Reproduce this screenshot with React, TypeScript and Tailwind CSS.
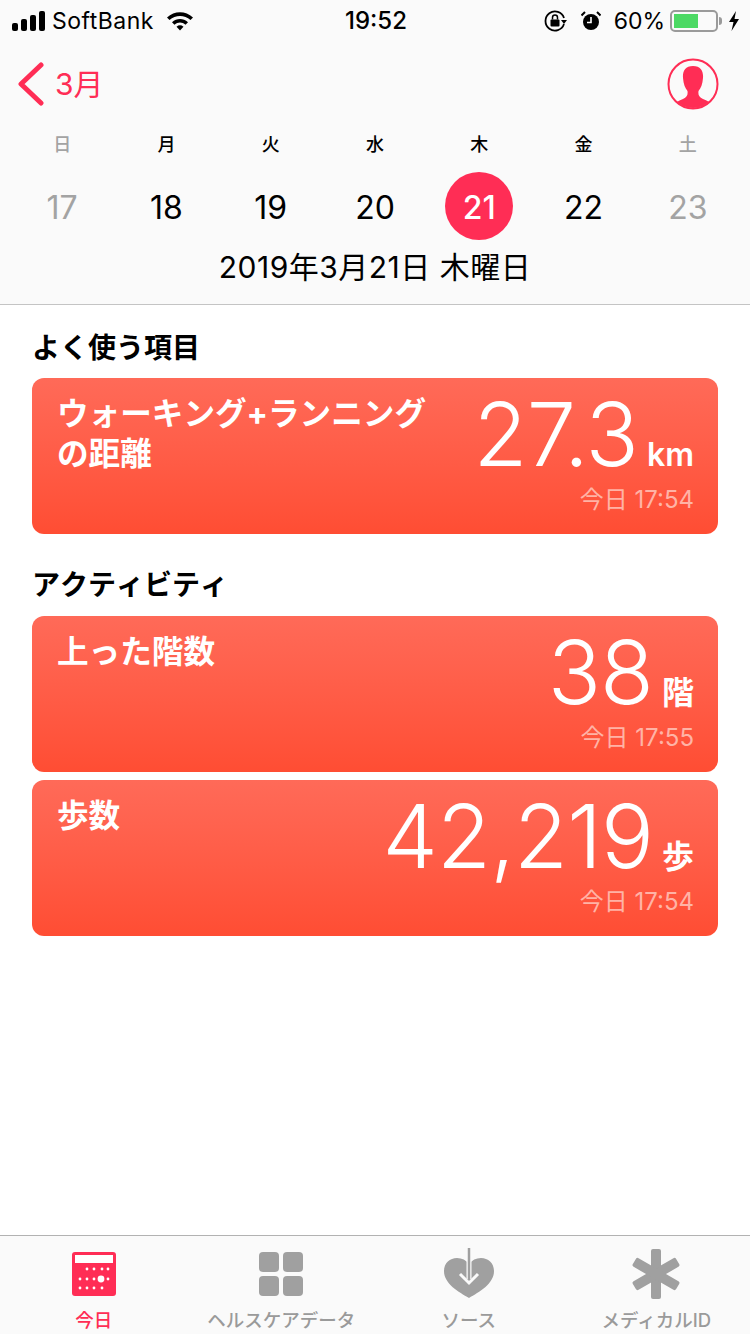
const week = [
  { label: '日', day: '17', muted: true },
  { label: '月', day: '18' },
  { label: '火', day: '19' },
  { label: '水', day: '20' },
  { label: '木', day: '21', today: true },
  { label: '金', day: '22' },
  { label: '土', day: '23', muted: true },
]

function StatusBar() {
  return (
    <div className="h-[42px] flex items-center justify-between pl-3 pr-[10px] text-[23px] text-black">
      <div className="flex items-center w-[280px]">
        <svg width="34" height="20" viewBox="0 0 34 20" className="mr-[6px]">
          <rect x="0" y="12" width="6" height="8" rx="2" fill="#000" />
          <rect x="9" y="8" width="6" height="12" rx="2" fill="#000" />
          <rect x="18" y="4" width="6" height="16" rx="2" fill="#000" />
          <rect x="27" y="0" width="6" height="20" rx="2" fill="#000" />
        </svg>
        <span className="leading-none tracking-[0.5px]">SoftBank</span>
        <svg width="28" height="20" viewBox="0 0 28 20" className="ml-[12px]">
          <path d="M1 6.5 C8.5 -0.5 19.5 -0.5 27 6.5 L24.5 9 C18.5 3.6 9.5 3.6 3.5 9 Z" fill="#000" />
          <path d="M6 11.2 C10.8 7 17.2 7 22 11.2 L19.5 13.7 C16 10.8 12 10.8 8.5 13.7 Z" fill="#000" />
          <path d="M10.5 15.7 C12.8 13.9 15.2 13.9 17.5 15.7 L14 19.5 Z" fill="#000" />
        </svg>
      </div>
      <span className="font-medium leading-none text-[24px]">19:52</span>
      <div className="flex items-center justify-end w-[280px]">
        <svg width="24" height="22" viewBox="0 0 24 22">
          <path d="M20 14 A9.5 9.5 0 1 1 20 8" fill="none" stroke="#000" strokeWidth="1.8" />
          <path d="M17 10 L23 10 L20 14 Z" fill="#000" />
          <rect x="6.5" y="9.5" width="9" height="7" rx="1" fill="#000" />
          <path d="M8.5 9.5 V7.5 A2.5 2.5 0 0 1 13.5 7.5 V9.5" fill="none" stroke="#000" strokeWidth="1.5" />
        </svg>
        <svg width="20" height="20" viewBox="0 0 20 20" className="ml-[13px]">
          <circle cx="10" cy="11" r="8" fill="#000" />
          <path d="M10 6 V11.5 H6" fill="none" stroke="#fff" strokeWidth="1.6" />
          <path d="M0.5 4.5 L4 1 M19.5 4.5 L16 1" stroke="#000" strokeWidth="2" />
        </svg>
        <span className="ml-[13px] leading-none">60%</span>
        <div className="ml-[5px] w-12 h-[22px] rounded-[5px] border-2 border-[#9a9a9a] p-[2px] flex">
          <div className="w-[60%] bg-[#4cd964]" />
        </div>
        <div className="w-[3px] h-2 bg-[#9a9a9a] rounded-r-sm ml-[1px]" />
        <svg width="12" height="20" viewBox="0 0 12 20" className="ml-[6px]">
          <path d="M8 0 L1 11 H5.5 L3.5 20 L11 8 H6.5 Z" fill="#000" />
        </svg>
      </div>
    </div>
  )
}

function Header() {
  return (
    <div className="bg-[#fafafa] border-b border-[#c4c4c4] h-[305px]">
      <StatusBar />
      <div className="flex items-center justify-between h-[84px] pl-[18px] pr-[31px]">
        <div className="flex items-center text-[#ff2d55]">
          <svg width="26" height="44" viewBox="0 0 26 44">
            <path d="M23 3 L3 22 L23 41" fill="none" stroke="#ff2d55" strokeWidth="5" strokeLinecap="round" strokeLinejoin="round" />
          </svg>
          <span className="text-[30px] leading-none ml-[11px]">3月</span>
        </div>
        <svg width="52" height="52" viewBox="0 0 52 52">
          <defs>
            <clipPath id="avatarClip">
              <circle cx="26" cy="26" r="24" />
            </clipPath>
          </defs>
          <circle cx="26" cy="26" r="24.5" fill="none" stroke="#ff2d55" strokeWidth="2" />
          <path
            clipPath="url(#avatarClip)"
            d="M26 8 C18 8 15.5 13 16 20 C16.5 26 18 30 20.5 33 C21 37 20 39 16 41 C12 43 8 44 6 47 L6 52 L46 52 L46 47 C44 44 40 43 36 41 C32 39 31 37 31.5 33 C34 30 35.5 26 36 20 C36.5 13 34 8 26 8 Z"
            fill="#ff2d55"
          />
        </svg>
      </div>
      <div className="grid grid-cols-7 px-[10px] pt-[4px]">
        {week.map((d) => (
          <div key={d.label} className="flex flex-col items-center">
            <span className={`text-[18px] leading-[30px] font-medium ${d.muted ? 'text-[#a3a3a3]' : 'text-black'}`}>
              {d.label}
            </span>
            <div
              className={`mt-3 pt-1 w-[68px] h-[68px] rounded-full flex items-center justify-center text-[32px] leading-none ${
                d.today ? 'bg-[#ff2d55] text-white font-medium' : d.muted ? 'text-[#a3a3a3]' : 'text-black'
              }`}
            >
              {d.day}
            </div>
          </div>
        ))}
      </div>
      <div className="text-center text-[30px] leading-9 text-black mt-[9px] tracking-[0.5px]">2019年3月21日 木曜日</div>
    </div>
  )
}

function Card({ title, value, unit, time }: { title: string[]; value: string; unit: string; time: string }) {
  return (
    <div className="h-[156px] rounded-xl bg-gradient-to-b from-[#ff6a58] to-[#ff4d33] text-white pl-[25px] pr-[24px] flex justify-between">
      <div className="pt-[16px] text-[31.6px] leading-[40px] font-bold [font-kerning:none]">
        {title.map((t) => (
          <div key={t}>{t}</div>
        ))}
      </div>
      <div className="flex flex-col items-end">
        <div className="flex items-baseline h-[100px] pt-[12px]">
          <span className="text-[88px] leading-[88px] font-light tracking-[-0.9px]">{value}</span>
          <span className="text-[32px] leading-none font-semibold ml-[9px]">{unit}</span>
        </div>
        <span className="text-[24px] leading-none text-[#ffb3a6] mt-[10px]">今日 {time}</span>
      </div>
    </div>
  )
}

function Tab({ label, active, children }: { label: string; active?: boolean; children: React.ReactNode }) {
  return (
    <div className="flex flex-col items-center">
      <div className="h-[60px] flex items-center justify-center">{children}</div>
      <span
        className={`text-[18.5px] leading-[22px] mt-[5px] whitespace-nowrap font-medium ${
          active ? 'text-[#ff2d55]' : 'text-[#9a9a9a]'
        }`}
      >
        {label}
      </span>
    </div>
  )
}

function TabBar() {
  const row1 = [15, 22, 30, 36]
  const row2 = [8, 15, 22, 29, 36]
  const row3 = [8, 15, 22, 30]
  return (
    <div className="h-[99px] bg-[#fafafa] border-t border-[#b2b2b2] grid grid-cols-4 pt-2">
      <Tab label="今日" active>
        <svg width="44" height="44" viewBox="0 0 44 44">
          <rect width="44" height="44" rx="3" fill="#ff2d55" />
          <rect x="3" y="3" width="38" height="8" fill="#fff" />
          {row1.map((x) => (
            <circle key={x} cx={x} cy="17" r="1.4" fill="#fff" />
          ))}
          {row2.map((x) => (
            <circle key={x} cx={x} cy="27" r={x === 29 ? 3.4 : 1.4} fill="#fff" />
          ))}
          {row3.map((x) => (
            <circle key={x} cx={x} cy="36" r="1.4" fill="#fff" />
          ))}
        </svg>
      </Tab>
      <Tab label="ヘルスケアデータ">
        <div className="grid grid-cols-2 gap-1">
          <div className="w-5 h-5 rounded-[4px] bg-[#a0a0a0]" />
          <div className="w-5 h-5 rounded-[4px] bg-[#a0a0a0]" />
          <div className="w-5 h-5 rounded-[4px] bg-[#a0a0a0]" />
          <div className="w-5 h-5 rounded-[4px] bg-[#a0a0a0]" />
        </div>
      </Tab>
      <Tab label="ソース">
        <svg width="52" height="52" viewBox="0 0 52 52">
          <path d="M26 50 C16 44 1 36 1 23 C1 15 7 10 14 10 C19 10 23 12 26 16 C29 12 33 10 38 10 C45 10 51 15 51 23 C51 36 36 44 26 50 Z" fill="#a0a0a0" />
          <path d="M26 8 V31" stroke="#fafafa" strokeWidth="5" />
          <path d="M26 0 V32" stroke="#a0a0a0" strokeWidth="2.5" />
          <path d="M17 26 L26 35 L35 26" fill="none" stroke="#fafafa" strokeWidth="3" />
        </svg>
      </Tab>
      <Tab label="メディカルID">
        <svg width="50" height="50" viewBox="0 0 50 50">
          <rect x="20" y="0" width="10" height="50" rx="2" fill="#a0a0a0" />
          <rect x="20" y="0" width="10" height="50" rx="2" fill="#a0a0a0" transform="rotate(60 25 25)" />
          <rect x="20" y="0" width="10" height="50" rx="2" fill="#a0a0a0" transform="rotate(120 25 25)" />
        </svg>
      </Tab>
    </div>
  )
}

export default function App() {
  return (
    <div
      className="w-[750px] h-[1334px] flex flex-col bg-white overflow-hidden"
      style={{ fontFamily: '"Inter", "Noto Sans CJK JP", sans-serif' }}
    >
      <Header />
      <div className="flex-1 px-8">
        <h2 className="text-[28px] leading-[36px] font-bold text-black mt-[25px] [font-kerning:none]">よく使う項目</h2>
        <div className="mt-3">
          <Card title={['ウォーキング+ランニング', 'の距離']} value="27.3" unit="km" time="17:54" />
        </div>
        <h2 className="text-[28px] leading-[36px] font-bold text-black mt-[33px] [font-kerning:none]">アクティビティ</h2>
        <div className="mt-[13px] flex flex-col gap-2">
          <Card title={['上った階数']} value="38" unit="階" time="17:55" />
          <Card title={['歩数']} value="42,219" unit="歩" time="17:54" />
        </div>
      </div>
      <TabBar />
    </div>
  )
}
